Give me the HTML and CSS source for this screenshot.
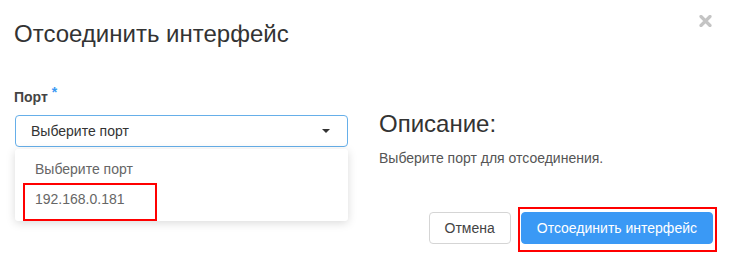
FILE: index.html
```html
<!DOCTYPE html>
<html lang="ru">
<head>
    <meta charset="UTF-8">
    <title>Отсоединить интерфейс</title>
    <link rel="stylesheet" href="styles.css">
</head>
<body>
    <div class="modal">
        <div class="modal-header">
            <h3 class="modal-title">Отсоединить интерфейс</h3>
            <button class="close" aria-label="Закрыть">
                <svg width="13" height="12" viewBox="0 0 13 12"><path d="M2 1.5 L11 10.5 M11 1.5 L2 10.5" stroke="#c4c4c4" stroke-width="3.2" stroke-linecap="round"/></svg>
            </button>
        </div>
        <div class="modal-body">
            <div class="col">
                <label class="field-label">Порт <span class="req">*</span></label>
                <div class="select-wrap">
                    <div class="select">
                        <span>Выберите порт</span>
                        <span class="caret"></span>
                    </div>
                    <ul class="dropdown">
                        <li class="placeholder">Выберите порт</li>
                        <li class="option">192.168.0.181</li>
                    </ul>
                </div>
            </div>
            <div class="col">
                <h3 class="desc-title">Описание:</h3>
                <p class="desc">Выберите порт для отсоединения.</p>
            </div>
        </div>
        <div class="modal-footer">
            <button class="btn btn-default">Отмена</button>
            <button class="btn btn-primary">Отсоединить интерфейс</button>
        </div>
    </div>
</body>
</html>
```
FILE: styles.css
```css
body { margin: 0; background: #fff; font-family: "Liberation Sans", Arial, sans-serif; color: #333; }
.modal { width: 729px; height: 258px; position: relative; overflow: hidden; }

.modal-header { display: flex; justify-content: space-between; align-items: flex-start; padding: 19px 17px 0 14px; }
.modal-title { margin: 0; font-size: 24px; font-weight: 400; line-height: 30px; color: #333; }
.close { background: none; border: 0; padding: 0; margin-top: -4px; cursor: pointer; line-height: 0; }

.modal-body { display: grid; grid-template-columns: 333px 1fr; gap: 31px; padding: 40px 15px 0 15px; }
.field-label { display: block; font-size: 14px; font-weight: 700; color: #444; line-height: 16px; margin-left: -1px; margin-bottom: 10px; }
.req { color: #3a99f3; position: relative; top: -5px; font-size: 14px; }

.select-wrap { position: relative; }
.select { height: 32px; border: 1px solid #66afe9; border-radius: 4px; display: flex; align-items: center; justify-content: space-between; padding: 0 17px 0 15px; font-size: 14px; color: #333; box-sizing: border-box; }
.caret { width: 0; height: 0; border-left: 4.5px solid transparent; border-right: 4.5px solid transparent; border-top: 4.5px solid #333; }

.dropdown { position: absolute; left: 0; right: 0; top: 34px; margin: 0; padding: 5px 0 0; list-style: none; background: #fff; border-radius: 3px; box-shadow: 0 2px 10px rgba(0, 0, 0, 0.15); height: 67px; }
.dropdown li { font-size: 14px; line-height: 30px; padding-left: 20px; color: #666; }
.dropdown .option { position: relative; }
.dropdown .option::after { content: ""; position: absolute; left: 8px; top: -1px; width: 130px; height: 34px; border: 2px solid #f00; }

.desc-title { margin: 20px 0 0; font-size: 24px; font-weight: 400; line-height: 30px; color: #333; }
.desc { margin: 11px 0 0; font-size: 14px; line-height: 16px; color: #555; }

.modal-footer { position: absolute; right: 16px; top: 212px; display: flex; gap: 10px; }
.btn { height: 32px; border-radius: 4px; font-family: inherit; font-size: 14px; padding: 0 15px; cursor: pointer; }
.btn-default { background: #fff; border: 1px solid #d5d5d5; color: #444; }
.btn-primary { position: relative; background: #3a99f5; border: 1px solid #3a99f5; color: #fff; }
.btn-primary::after { content: ""; position: absolute; left: -4px; right: -5px; top: -6px; bottom: -9px; border: 2px solid #f00; }
```
